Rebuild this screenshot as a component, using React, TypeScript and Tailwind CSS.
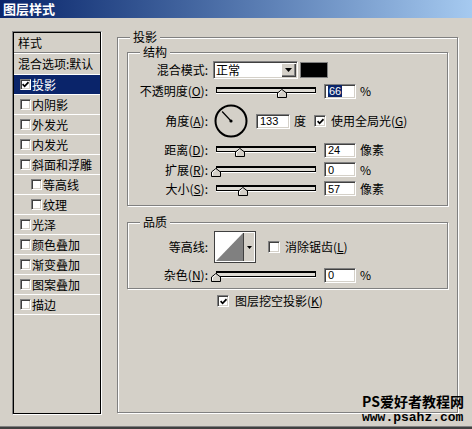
import React from 'react';

const effects = [
    { name: '投影', on: true, sel: true },
    { name: '内阴影' },
    { name: '外发光' },
    { name: '内发光' },
    { name: '斜面和浮雕' },
    { name: '等高线', sub: true },
    { name: '纹理', sub: true },
    { name: '光泽' },
    { name: '颜色叠加' },
    { name: '渐变叠加' },
    { name: '图案叠加' },
    { name: '描边' },
];

const Check = ({ on = false, size = 'h-[12px] w-[12px]' }: { on?: boolean; size?: string }) => (
    <span
        className={`flex shrink-0 items-center justify-center border border-t-[#808080] border-l-[#808080] border-r-white border-b-white bg-white shadow-[inset_1px_1px_0_#404040,inset_-1px_-1px_0_#d4d0c8] ${size}`}
    >
        {on && (
            <svg width="7" height="7" viewBox="0 0 7 7">
                <path d="M0.6 3.2 L2.6 5.3 L6.5 1.2" stroke="#000" strokeWidth="1.7" fill="none" />
            </svg>
        )}
    </span>
);

const Field = ({ children, w = 'w-[32px]', sel = false }: { children: React.ReactNode; w?: string; sel?: boolean }) => (
    <span
        className={`ml-[8px] flex h-[15px] shrink-0 items-center border border-t-[#808080] border-l-[#808080] border-r-white border-b-white bg-white pl-[3px] font-['Liberation_Sans',sans-serif] text-[11px] leading-[12px] shadow-[inset_1px_1px_0_#404040,inset_-1px_-1px_0_#d4d0c8] ${w}`}
    >
        {sel ? <span className="bg-[#0a246a] px-[1px] text-white">{children}</span> : children}
    </span>
);

const Label = ({ children }: { children: React.ReactNode }) => (
    <span className="w-[80px] shrink-0 text-right">{children}</span>
);

const Slider = ({ pos }: { pos: number }) => (
    <div className="relative ml-[8px] h-[20px] w-[100px] shrink-0">
        <div className="mt-[6px] h-[6px] border border-black border-t-2 bg-[#dedbd4] shadow-[0_1px_0_#fff]" />
        <svg className="absolute top-[8px]" style={{ left: pos - 5 }} width="10" height="9" viewBox="0 0 10 9">
            <path d="M5 0.5 L9.5 4 L9.5 8.5 L0.5 8.5 L0.5 4 Z" fill="#d4d0c8" stroke="#000" />
            <path d="M1.5 7.5 L1.5 4.4 L5 1.7" stroke="#fff" fill="none" />
        </svg>
    </div>
);

const Group = ({ title, className, children }: { title: string; className: string; children: React.ReactNode }) => (
    <div className={`flex shrink-0 flex-col border border-[#808080] shadow-[inset_1px_1px_0_#fff,1px_1px_0_#fff] ${className}`}>
        <span className="-mt-[8px] ml-[12px] h-[14px] w-fit bg-[#d4d0c8] px-[3px] leading-[14px]">{title}</span>
        {children}
    </div>
);

const angle = (133 * Math.PI) / 180;

export default function App() {
    return (
        <div className="relative flex h-[429px] w-[472px] flex-col overflow-hidden bg-[#d4d0c8] font-['Noto_Sans_CJK_SC',sans-serif] text-[12px] leading-[14px] text-black">
            <div className="flex h-[18px] shrink-0 items-center bg-linear-to-r from-[#0a246a] to-[#a6caf0] pl-[3px] text-[13px] font-bold text-white">
                图层样式
            </div>

            <div className="flex flex-1">
                {/* style list */}
                <div className="ml-[12px] mt-[13px] h-[384px] w-[90px] shrink-0 border border-t-[#808080] border-l-[#808080] border-r-white border-b-white">
                    <div className="flex h-full flex-col border border-black">
                        <div className="flex h-[20px] shrink-0 items-center border-b border-[#808080] pl-[4px] shadow-[0_1px_0_#fff]">样式</div>
                        <div className="mt-[1px] flex h-[21px] shrink-0 items-center border-b border-white pl-[4px] whitespace-nowrap">混合选项:默认</div>
                        {effects.map(e => (
                            <div
                                key={e.name}
                                className={`flex h-[20px] shrink-0 items-center border-b border-white ${e.sub ? 'pl-[17px]' : 'pl-[6px]'} ${e.sel ? 'bg-[#0a246a] text-white' : ''}`}
                            >
                                <Check on={e.on} size="h-[11px] w-[11px]" />
                                <span className="ml-[1px]">{e.name}</span>
                            </div>
                        ))}
                    </div>
                </div>

                {/* drop shadow panel */}
                <Group title="投影" className="ml-[15px] mt-[19px] h-[376px] w-[341px]">
                    <Group title="结构" className="ml-[9px] mt-[8px] h-[154px] w-[321px]">
                        <div className="mt-[2px] flex h-[18px] items-center">
                            <Label>混合模式:</Label>
                            <div className="ml-[5px] flex h-[18px] w-[85px] items-center border border-t-[#808080] border-l-[#808080] border-r-white border-b-white bg-white shadow-[inset_1px_1px_0_#404040,inset_-1px_-1px_0_#d4d0c8]">
                                <span className="flex-1 pl-[2px]">正常</span>
                                <span className="mr-[1px] flex h-[14px] w-[15px] items-center justify-center bg-[#d4d0c8] shadow-[inset_1px_1px_0_#fff,inset_-1px_-1px_0_#404040,inset_-2px_-2px_0_#808080]">
                                    <svg width="7" height="4" viewBox="0 0 7 4">
                                        <path d="M0 0 H7 L3.5 4 Z" fill="#000" />
                                    </svg>
                                </span>
                            </div>
                            <span className="ml-[2px] h-[16px] w-[28px] border border-[#808080] bg-black" />
                        </div>

                        <div className="mt-[2px] flex h-[20px] items-center">
                            <Label>
                                不透明度(<u>O</u>):
                            </Label>
                            <Slider pos={66} />
                            <Field sel>66</Field>
                            <span className="ml-[4px]">%</span>
                        </div>

                        <div className="mt-[3px] flex h-[34px] items-center">
                            <Label>
                                角度(<u>A</u>):
                            </Label>
                            <svg className="ml-[6px] shrink-0" width="34" height="34" viewBox="0 0 34 34">
                                <circle cx="17" cy="17" r="15.5" fill="none" stroke="#000" strokeWidth="2" />
                                <line
                                    x1="17"
                                    y1="17"
                                    x2={17 + 13 * Math.cos(angle)}
                                    y2={17 - 13 * Math.sin(angle)}
                                    stroke="#000"
                                    strokeWidth="1.2"
                                />
                                <circle cx="17" cy="17" r="1.6" fill="#000" />
                            </svg>
                            <Field w="w-[34px]">133</Field>
                            <span className="ml-[4px]">度</span>
                            <span className="ml-[8px]">
                                <Check on />
                            </span>
                            <span className="ml-[5px] whitespace-nowrap">
                                使用全局光(<u>G</u>)
                            </span>
                        </div>

                        <div className="mt-[2px] flex h-[20px] items-center">
                            <Label>
                                距离(<u>D</u>):
                            </Label>
                            <Slider pos={24} />
                            <Field>24</Field>
                            <span className="ml-[4px]">像素</span>
                        </div>
                        <div className="flex h-[19px] items-center">
                            <Label>
                                扩展(<u>R</u>):
                            </Label>
                            <Slider pos={0} />
                            <Field>0</Field>
                            <span className="ml-[4px]">%</span>
                        </div>
                        <div className="flex h-[19px] items-center">
                            <Label>
                                大小(<u>S</u>):
                            </Label>
                            <Slider pos={27} />
                            <Field>57</Field>
                            <span className="ml-[4px]">像素</span>
                        </div>
                    </Group>

                    <Group title="品质" className="ml-[9px] mt-[16px] h-[67px] w-[321px]">
                        <div className="mt-[2px] flex h-[32px] items-center">
                            <Label>等高线:</Label>
                            <div className="ml-[6px] flex h-[32px] w-[42px] shrink-0 border border-[#404040] bg-white p-[1px]">
                                <svg width="27" height="28" viewBox="0 0 27 28" preserveAspectRatio="none">
                                    <polygon points="0,28 27,0 27,28" fill="#808080" />
                                </svg>
                                <span className="flex w-[11px] items-center justify-center border-l border-[#404040] bg-[#d4d0c8]">
                                    <svg width="5" height="3" viewBox="0 0 5 3">
                                        <path d="M0 0 H5 L2.5 3 Z" fill="#000" />
                                    </svg>
                                </span>
                            </div>
                            <span className="ml-[12px]">
                                <Check />
                            </span>
                            <span className="ml-[5px] whitespace-nowrap">
                                消除锯齿(<u>L</u>)
                            </span>
                        </div>
                        <div className="mt-[2px] flex h-[20px] items-center">
                            <Label>
                                杂色(<u>N</u>):
                            </Label>
                            <Slider pos={0} />
                            <Field>0</Field>
                            <span className="ml-[4px]">%</span>
                        </div>
                    </Group>

                    <div className="ml-[99px] mt-[5px] flex h-[14px] items-center">
                        <Check on />
                        <span className="ml-[6px] whitespace-nowrap">
                            图层挖空投影(<u>K</u>)
                        </span>
                    </div>
                </Group>
            </div>

            <div className="h-[3px] shrink-0 border-t border-[#808080] bg-[#404040]" />

            <div className="absolute left-[362px] top-[394px] flex flex-col gap-[4px]">
                <span className="text-[14px] font-bold leading-[14px]">PS爱好者教程网</span>
                <span className="font-['Liberation_Mono',monospace] text-[13px] font-bold leading-[12px]">www.psahz.com</span>
            </div>
        </div>
    );
}
